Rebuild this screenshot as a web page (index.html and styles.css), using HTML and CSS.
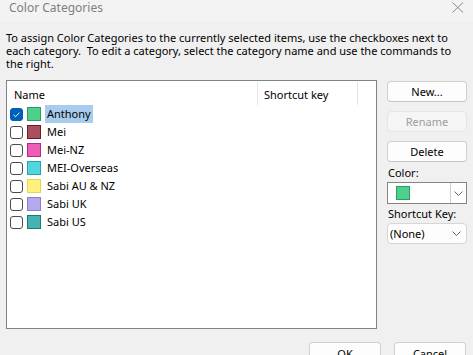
FILE: index.html
```html
<!DOCTYPE html>
<html>
<head>
<meta charset="utf-8">
<link rel="stylesheet" href="styles.css">
</head>
<body>
<div class="dialog">
  <div class="titlebar">
    <span class="title">Color Categories</span>
    <svg class="close" width="12" height="11" viewBox="0 0 12 11"><path d="M0.5 0.5 L11 10.5 M11 0.5 L0.5 10.5" stroke="#8a8a8a" stroke-width="1" fill="none"/></svg>
  </div>
  <p class="desc">To assign Color Categories to the currently selected items, use the checkboxes next to each category.&nbsp; To edit a category, select the category name and use the commands to the right.</p>
  <div class="main">
    <div class="list">
      <div class="header">
        <div class="col-name">Name</div>
        <div class="col-key">Shortcut key</div>
        <div class="col-rest"></div>
      </div>
      <div class="row">
        <span class="check checked"><svg width="13" height="13" viewBox="0 0 13 13"><path d="M3.5 6.8 L5.5 8.7 L9.6 4.6" stroke="#fff" stroke-width="1" fill="none"/></svg></span>
        <span class="swatch" style="background:#4fcf8c;border-color:#2f9a62"></span>
        <span class="label selected">Anthony</span>
      </div>
      <div class="row">
        <span class="check"></span>
        <span class="swatch" style="background:#a94f5e;border-color:#6e1c2c"></span>
        <span class="label">Mei</span>
      </div>
      <div class="row">
        <span class="check"></span>
        <span class="swatch" style="background:#ef5cb8;border-color:#b52c86"></span>
        <span class="label">Mei-NZ</span>
      </div>
      <div class="row">
        <span class="check"></span>
        <span class="swatch" style="background:#4fd6df;border-color:#2da2ab"></span>
        <span class="label">MEI-Overseas</span>
      </div>
      <div class="row">
        <span class="check"></span>
        <span class="swatch" style="background:#fff27a;border-color:#e6d658"></span>
        <span class="label">Sabi AU &amp; NZ</span>
      </div>
      <div class="row">
        <span class="check"></span>
        <span class="swatch" style="background:#b4a9ec;border-color:#8c80c6"></span>
        <span class="label">Sabi UK</span>
      </div>
      <div class="row">
        <span class="check"></span>
        <span class="swatch" style="background:#44b3b1;border-color:#1c7b7a"></span>
        <span class="label">Sabi US</span>
      </div>
    </div>
    <div class="side">
      <button class="btn">New...</button>
      <button class="btn disabled">Rename</button>
      <button class="btn">Delete</button>
      <div class="flabel">Color:</div>
      <div class="colorpick">
        <span class="cswatch"></span>
        <span class="dropbtn"><svg width="9" height="5" viewBox="0 0 9 5"><path d="M0.5 0.5 L4.5 4.5 L8.5 0.5" stroke="#666" stroke-width="1" fill="none"/></svg></span>
      </div>
      <div class="flabel">Shortcut Key:</div>
      <div class="select">
        <span>(None)</span>
        <svg width="9" height="5" viewBox="0 0 9 5"><path d="M0.5 0.5 L4.5 4.5 L8.5 0.5" stroke="#666" stroke-width="1" fill="none"/></svg>
      </div>
    </div>
  </div>
  <div class="footer">
    <button class="btn fbtn">OK</button>
    <button class="btn fbtn">Cancel</button>
  </div>
</div>
</body>
</html>
```
FILE: styles.css
```css
html, body {
  margin: 0;
  padding: 0;
  background: #f0f0f0;
}
.dialog {
  width: 473px;
  height: 355px;
  overflow: hidden;
  font-family: "Noto Sans", "Open Sans", sans-serif;
  font-size: 11px;
  color: #000;
  background: #f0f0f0;
  display: flex;
  flex-direction: column;
}
.titlebar {
  height: 22px;
  flex: none;
  background: #f3f3f3;
  display: flex;
  align-items: center;
  justify-content: space-between;
  padding: 0 9px 0 9px;
  box-sizing: border-box;
}
.title {
  color: #7f7f7f;
  font-size: 12px;
  margin-top: -7px;
}
.close {
  margin-top: -7px;
}
.desc {
  margin: 9px 0 0 6px;
  line-height: 13px;
  width: 460px;
  flex: none;
}
.main {
  display: flex;
  margin-top: 10px;
  padding-left: 6px;
  gap: 10px;
  flex: none;
}
.list {
  width: 371px;
  height: 249px;
  box-sizing: border-box;
  border: 1px solid #828282;
  background: #fff;
}
.header {
  display: flex;
  height: 24px;
  align-items: stretch;
}
.header > div {
  display: flex;
  align-items: center;
  padding-top: 1px;
  border-right: 1px solid #e5e5e5;
  margin: 1px 0 0;
  height: 22px;
}
.col-name {
  width: 243px;
  padding-left: 7px;
}
.col-key {
  width: 93px;
  padding-left: 6px;
}
.col-rest {
  border-right: none !important;
}
.row {
  display: flex;
  align-items: center;
  height: 18px;
  padding-left: 3px;
}
.check {
  width: 13px;
  height: 13px;
  box-sizing: border-box;
  border: 1px solid #4a4a4a;
  border-radius: 3px;
  background: #fff;
  flex: none;
  display: flex;
}
.check.checked {
  background: #005fb8;
  border-color: #005fb8;
}
.check.checked svg {
  margin: -1px;
}
.swatch {
  width: 14px;
  height: 14px;
  box-sizing: border-box;
  border: 1px solid;
  margin-left: 4px;
  flex: none;
}
.label {
  margin-left: 4px;
  padding: 0 2px;
  line-height: 18px;
}
.label.selected {
  background: #a7ccee;
}
.side {
  width: 80px;
  display: flex;
  flex-direction: column;
  padding-top: 1px;
}
.btn {
  font-family: inherit;
  font-size: 11px;
  height: 21px;
  width: 80px;
  padding: 0;
  box-sizing: border-box;
  border: 1px solid #d0d0d0;
  border-bottom-color: #c4c4c4;
  border-radius: 4px;
  background: #fdfdfd;
  color: #000;
  margin-bottom: 9px;
}
.btn.disabled {
  background: #f5f5f5;
  border-color: #e5e5e5;
  color: #9d9d9d;
}
.side .btn:nth-of-type(3) {
  margin-bottom: 1px;
}
.flabel {
  line-height: 19px;
  padding-left: 1px;
}
.colorpick {
  height: 22px;
  box-sizing: border-box;
  border: 1px solid #858585;
  background: #fff;
  display: flex;
  align-items: center;
  justify-content: space-between;
  padding-left: 8px;
}
.cswatch {
  width: 14px;
  height: 14px;
  box-sizing: border-box;
  background: #4fcf8c;
  border: 1px solid #2f9a62;
}
.dropbtn {
  width: 16px;
  height: 20px;
  box-sizing: border-box;
  border-left: 1px solid #cfcfcf;
  display: flex;
  align-items: center;
  justify-content: center;
}
.select {
  height: 21px;
  box-sizing: border-box;
  border: 1px solid #d6d6d6;
  border-radius: 4px;
  background: #fdfdfd;
  display: flex;
  align-items: center;
  justify-content: space-between;
  padding: 0 5px 0 2px;
}
.footer {
  display: flex;
  justify-content: flex-end;
  gap: 13px;
  padding-right: 7px;
  margin-top: 13px;
}
.fbtn {
  width: 72px;
  height: 22px;
  margin: 0;
}
```
